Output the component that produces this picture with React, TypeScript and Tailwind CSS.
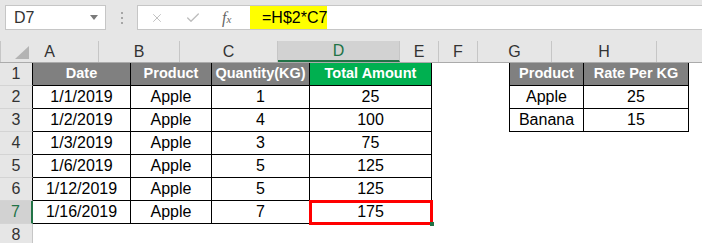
import React from "react";
import { X, Check } from "lucide-react";

const columns = [
  { key: "A", w: "w-[98px]" },
  { key: "B", w: "w-[81px]" },
  { key: "C", w: "w-[98px]" },
  { key: "D", w: "w-[122px]" },
  { key: "E", w: "w-[39px]" },
  { key: "F", w: "w-[39px]" },
  { key: "G", w: "w-[74px]" },
  { key: "H", w: "w-[105px]" },
  { key: "I", w: "w-[60px]" },
];

const rows: string[][] = [
  ["Date", "Product", "Quantity(KG)", "Total Amount", "", "", "Product", "Rate Per KG", ""],
  ["1/1/2019", "Apple", "1", "25", "", "", "Apple", "25", ""],
  ["1/2/2019", "Apple", "4", "100", "", "", "Banana", "15", ""],
  ["1/3/2019", "Apple", "3", "75", "", "", "", "", ""],
  ["1/6/2019", "Apple", "5", "125", "", "", "", "", ""],
  ["1/12/2019", "Apple", "5", "125", "", "", "", "", ""],
  ["1/16/2019", "Apple", "7", "175", "", "", "", "", ""],
  ["", "", "", "", "", "", "", "", ""],
];

function cellClass(ri: number, ci: number) {
  const inMain = ci <= 3 && ri <= 6;
  const inRate = (ci === 6 || ci === 7) && ri <= 2;
  let cls = "";
  if (inMain || inRate) cls += " border-r border-b border-black";
  if (ci === 5 && ri <= 2) cls += " border-r border-black";
  if (ri === 0 && (inMain || inRate)) {
    cls += " text-white font-bold text-[14.5px]";
    cls += ci === 3 ? " bg-[#00b050]" : " bg-[#808080]";
  } else {
    cls += " text-black text-[16px]";
  }
  return cls;
}

function FormulaBar() {
  return (
    <div className="h-[41px] bg-[#e6e6e6] pt-[5px] flex items-start">
      {/* Name box */}
      <div className="ml-[5px] w-[101px] h-[25px] bg-white border border-[#c6c6c6] flex items-center justify-between pl-[8px] pr-[7px]">
        <span className="text-[16px] text-[#333]">D7</span>
        <svg width="8" height="5" viewBox="0 0 8 5">
          <polygon points="0,0 8,0 4,5" fill="#7a7a7a" />
        </svg>
      </div>
      {/* separator dots */}
      <div className="w-[31px] h-[25px] flex flex-col items-center justify-center gap-[3px]">
        <span className="w-[2px] h-[2px] bg-[#a6a6a6]" />
        <span className="w-[2px] h-[2px] bg-[#a6a6a6]" />
        <span className="w-[2px] h-[2px] bg-[#a6a6a6]" />
      </div>
      {/* Formula box */}
      <div className="flex-1 h-[25px] bg-white border-y border-l border-[#c6c6c6] flex items-stretch">
        <div className="w-[112px] flex items-center">
          <X className="ml-[12px] w-[14px] h-[14px] text-[#bdbdbd]" strokeWidth={1.6} />
          <Check className="ml-[21px] w-[16px] h-[16px] text-[#bdbdbd]" strokeWidth={2} />
          <span
            className="ml-[21px] text-[#666] italic text-[16px] leading-none"
            style={{ fontFamily: '"Liberation Serif", serif' }}
          >
            f<span className="text-[11px]">x</span>
          </span>
        </div>
        <div className="w-[77px] bg-[#ffff00] flex items-center pl-[12px] text-[16px] text-black">
          =H$2*C7
        </div>
      </div>
    </div>
  );
}

export default function App() {
  return (
    <div
      className="w-[702px] h-[243px] overflow-hidden bg-white"
      style={{ fontFamily: '"Liberation Sans", Arial, sans-serif' }}
    >
      <FormulaBar />

      {/* Column headers */}
      <div className="flex h-[22px] bg-[#e6e6e6] border-b border-[#ababab]">
        <div className="w-[33px] border-r border-[#c6c6c6] relative">
          <svg className="absolute left-0 top-0" width="33" height="21" viewBox="0 0 33 21">
            <polygon points="29,5 29,18 15,18" fill="#b4b4b4" />
          </svg>
        </div>
        {columns.map((c) => (
          <div
            key={c.key}
            className={`${c.w} shrink-0 flex items-center justify-center text-[16px] border-r border-[#c6c6c6] ${
              c.key === "D"
                ? "bg-[#d2d2d2] text-[#217346] border-b-2 border-b-[#217346]"
                : "text-[#333]"
            }`}
          >
            {c.key === "I" ? "" : c.key}
          </div>
        ))}
      </div>

      {/* Rows */}
      {rows.map((row, ri) => (
        <div key={ri} className="flex h-[23px]">
          <div
            className={`w-[33px] shrink-0 flex items-center justify-center text-[16px] border-b border-[#d4d4d4] ${
              ri === 6
                ? "bg-[#d2d2d2] text-[#217346] border-r-2 border-r-[#217346]"
                : ri === 7
                ? "bg-[#e6e6e6] text-[#333] border-r border-r-[#c6c6c6]"
                : "bg-[#e6e6e6] text-[#333] border-r border-r-black"
            }`}
          >
            {ri + 1}
          </div>
          {columns.map((c, ci) => (
            <div
              key={c.key}
              className={`${c.w} shrink-0 flex items-center justify-center relative ${cellClass(ri, ci)}`}
            >
              {row[ci]}
              {ri === 6 && ci === 3 && (
                <>
                  <div className="absolute -left-[1px] -top-[1px] -right-[2px] -bottom-[2px] border-[3px] border-[#ff0000]" />
                  <div className="absolute -right-[3px] -bottom-[3px] w-[4px] h-[4px] bg-[#217346]" />
                </>
              )}
            </div>
          ))}
        </div>
      ))}
    </div>
  );
}
